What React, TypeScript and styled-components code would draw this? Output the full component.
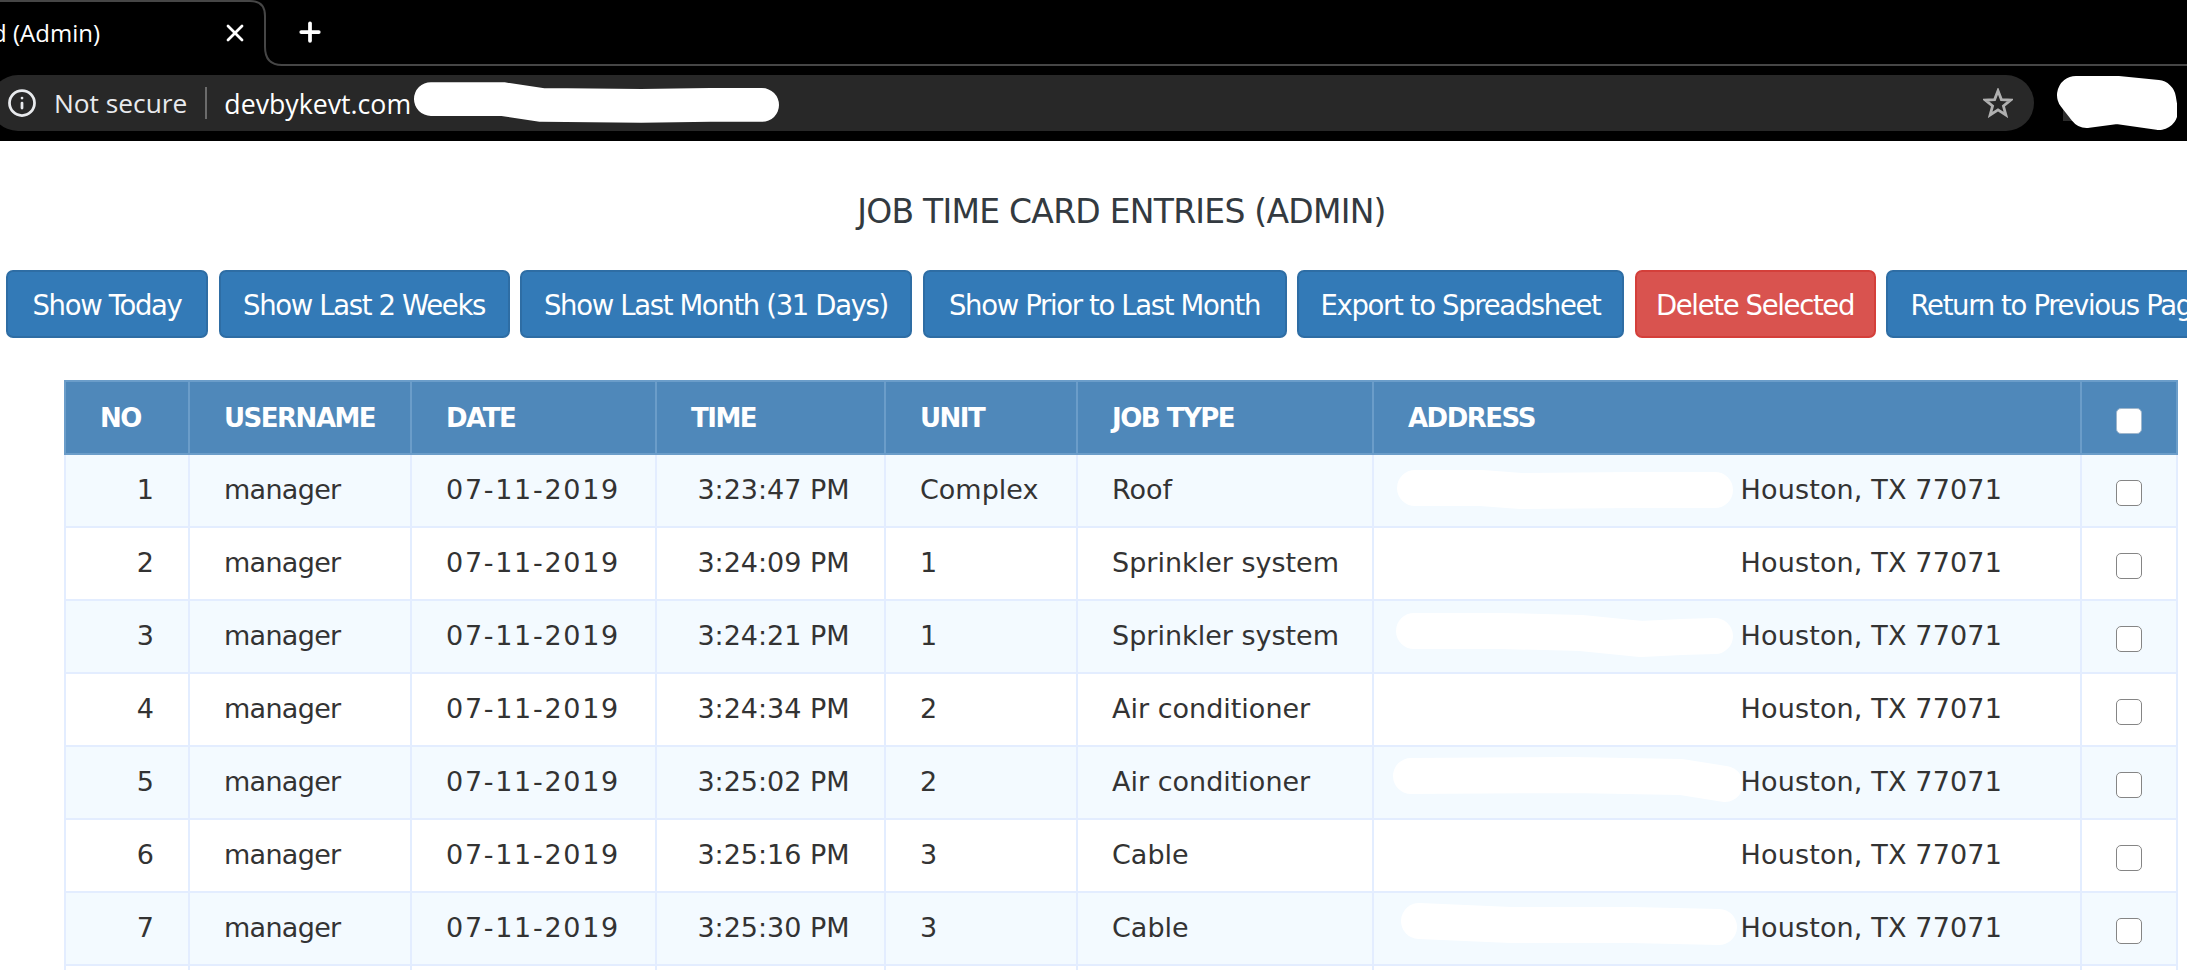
import React from 'react';
import styled, { createGlobalStyle } from 'styled-components';
import { Info, Plus, X } from 'lucide-react';

const GlobalStyle = createGlobalStyle`
  html, body {
    margin: 0;
    padding: 0;
    background: #ffffff;
    overflow: hidden;
  }
`;

const Page = styled.div`
  width: 2187px;
  height: 970px;
  overflow: hidden;
  background: #ffffff;
  color: #333333;
  font-family: 'DejaVu Sans', 'Liberation Sans', sans-serif;
`;

const TabStrip = styled.div`
  display: flex;
  height: 66px;
  background: #000000;
`;

const Tab = styled.div`
  width: 250px;
  height: 66px;
  box-sizing: border-box;
  padding-bottom: 3px;
  border-top: 2px solid #464646;
  display: flex;
  align-items: center;
  justify-content: flex-end;
  color: #ffffff;
  overflow: hidden;
  flex-shrink: 0;
`;

const TabTitle = styled.span`
  font-family: 'Open Sans', sans-serif;
  font-size: 24px;
  white-space: nowrap;
  margin-right: 121px;
`;

const TabClose = styled(X)`
  flex-shrink: 0;
  margin-right: 1px;
`;

const TabCurve = styled.svg`
  flex-shrink: 0;
  display: block;
`;

const TabRest = styled.div`
  flex: 1;
  box-sizing: border-box;
  border-bottom: 2px solid #464646;
  display: flex;
  align-items: center;
  padding-left: 13px;
  color: #ffffff;
`;

const NavRow = styled.div`
  height: 75px;
  box-sizing: border-box;
  padding-top: 9px;
  background: #000000;
  display: flex;
  overflow: hidden;
`;

const AddressBar = styled.div`
  width: 2044px;
  height: 56px;
  margin-left: -10px;
  box-sizing: border-box;
  padding: 0 21px 0 17px;
  background: #282828;
  border-radius: 28px;
  display: flex;
  align-items: center;
  flex-shrink: 0;
  color: #ffffff;
  font-family: 'Open Sans', sans-serif;
  font-size: 26.7px;
`;

const NotSecure = styled.span`
  margin-left: 17px;
  font-size: 26.3px;
  color: #e8eaed;
`;

const Divider = styled.span`
  width: 2px;
  height: 32px;
  margin: 0 17px 0 18px;
  background: #6b6b6b;
`;

const UrlHost = styled.span``;

const UrlMask = styled.svg`
  display: block;
  margin-left: 2px;
`;

const Spacer = styled.div`
  flex: 1;
`;

const AvatarMask = styled.svg`
  display: block;
  margin-left: 23px;
  flex-shrink: 0;
`;

const Title = styled.h1`
  margin: 0;
  padding: 49px 0 0 56px;
  font-size: 33px;
  line-height: 44px;
  font-weight: 400;
  text-align: center;
  color: #333a40;
  letter-spacing: -0.75px;
`;

const Toolbar = styled.div`
  display: flex;
  gap: 10.5px;
  margin: 36px 0 42px 6px;
  white-space: nowrap;
`;

const Button = styled.button<{ $danger?: boolean; $width: number }>`
  flex-shrink: 0;
  width: ${props => props.$width}px;
  height: 68px;
  box-sizing: border-box;
  padding: 2px 0 0;
  border: 2px solid ${props => (props.$danger ? '#d43f3a' : '#2e6da4')};
  border-radius: 7px;
  background: ${props => (props.$danger ? '#d9534f' : '#337ab7')};
  color: #ffffff;
  font-family: inherit;
  font-size: 27.5px;
  letter-spacing: -1.35px;
  white-space: nowrap;
`;

const JobTable = styled.table`
  width: 2112px;
  margin-left: 64px;
  table-layout: fixed;
  border-collapse: collapse;
`;

const HeadCell = styled.th`
  height: 71px;
  padding: 0 0 0 34px;
  background: #4f88ba;
  border: 2px solid #6b9dc9;
  color: #ffffff;
  font-size: 26px;
  font-weight: 700;
  text-align: left;
  letter-spacing: -1.5px;
`;

const CheckHeadCell = styled(HeadCell)`
  padding: 0;
  text-align: center;
`;

const Row = styled.tr<{ $shaded: boolean }>`
  background: ${props => (props.$shaded ? '#f3faff' : '#ffffff')};
`;

const Cell = styled.td<{ $align?: string; $spacing?: number }>`
  height: 69px;
  padding: 0 34px 2px;
  border: 2px solid #e3edff;
  font-size: 27px;
  white-space: nowrap;
  text-align: ${props => props.$align || 'left'};
  letter-spacing: ${props => props.$spacing || 0}px;
  color: #333333;
`;

const TimeCell = styled(Cell)`
  padding: 0 34px 2px 40px;
`;

const AddressCell = styled(Cell)`
  padding: 0 78px 2px 0;
`;

const AddressInner = styled.div`
  display: flex;
  align-items: center;
  justify-content: flex-end;
`;

const Mask = styled.svg`
  display: block;
  flex-shrink: 0;
  overflow: visible;
`;

const CheckCell = styled(Cell)`
  padding: 0 0 2px;
  text-align: center;
`;

const Check = styled.input<{ $head?: boolean }>`
  appearance: none;
  display: inline-block;
  width: 26px;
  height: 26px;
  margin: 6px 0 0;
  box-sizing: border-box;
  vertical-align: middle;
  border: 1.5px solid ${props => (props.$head ? '#9fb6cc' : '#858585')};
  border-radius: 5px;
  background: #ffffff;
`;

const buttons = [
  { label: 'Show Today', width: 202 },
  { label: 'Show Last 2 Weeks', width: 291 },
  { label: 'Show Last Month (31 Days)', width: 392 },
  { label: 'Show Prior to Last Month', width: 364 },
  { label: 'Export to Spreadsheet', width: 327 },
  { label: 'Delete Selected', width: 241, danger: true },
  { label: 'Return to Previous Page', width: 346 },
];

const columns = [
  { name: 'NO', width: 124 },
  { name: 'USERNAME', width: 222 },
  { name: 'DATE', width: 245 },
  { name: 'TIME', width: 229 },
  { name: 'UNIT', width: 192 },
  { name: 'JOB TYPE', width: 296 },
  { name: 'ADDRESS', width: 708 },
];

// the scribbled out street numbers, one stroke per shaded row
const masks: Record<number, string> = {
  1: 'M24 23 L90 23 L130 26 L240 25 L324 25',
  3: 'M23 20 H110 L190 22 L250 28 L290 26 L324 25',
  5: 'M20 19 L180 18 L290 20 L334 27',
  7: 'M28 18 L120 22 L240 22 L328 24',
};

const rows = [
  { no: 1, time: '3:23:47 PM', unit: 'Complex', job: 'Roof' },
  { no: 2, time: '3:24:09 PM', unit: '1', job: 'Sprinkler system' },
  { no: 3, time: '3:24:21 PM', unit: '1', job: 'Sprinkler system' },
  { no: 4, time: '3:24:34 PM', unit: '2', job: 'Air conditioner' },
  { no: 5, time: '3:25:02 PM', unit: '2', job: 'Air conditioner' },
  { no: 6, time: '3:25:16 PM', unit: '3', job: 'Cable' },
  { no: 7, time: '3:25:30 PM', unit: '3', job: 'Cable' },
];

const App: React.FC = () => {
  return (
    <Page>
      <GlobalStyle />
      <TabStrip>
        <Tab>
          <TabTitle>Job Time Card (Admin)</TabTitle>
          <TabClose size={28} strokeWidth={2.4} />
        </Tab>
        <TabCurve width="32" height="66" viewBox="0 0 32 66">
          <path d="M0 1 Q15 1 15 16 V47 Q15 65 32 65" fill="none" stroke="#464646" strokeWidth="2" />
        </TabCurve>
        <TabRest>
          <Plus size={30} strokeWidth={3} />
        </TabRest>
      </TabStrip>

      <NavRow>
        <AddressBar>
          <Info size={30} strokeWidth={2.2} color="#e8eaed" />
          <NotSecure>Not secure</NotSecure>
          <Divider />
          <UrlHost>devbykevt.com</UrlHost>
          <UrlMask width="366" height="44" viewBox="0 0 369 44">
            <path d="M18 18 L90 18 L130 24 L230 25 L300 24 L352 24" fill="none" stroke="#ffffff" strokeWidth="34" strokeLinecap="round" strokeLinejoin="round" />
          </UrlMask>
          <Spacer />
          <svg width="30" height="30" viewBox="0 0 32 32">
            <polygon points="16,3 19.6,12.4 29.5,12.9 21.8,19.2 24.4,28.8 16,23.4 7.6,28.8 10.2,19.2 2.5,12.9 12.4,12.4" fill="none" stroke="#b0b0b0" strokeWidth="3" />
          </svg>
        </AddressBar>
        <AvatarMask width="120" height="56" viewBox="0 0 120 56">
          <rect x="6" y="20" width="40" height="26" fill="#2c2c2c" />
          <rect x="68" y="38" width="18" height="10" fill="#e01b1b" />
          <path d="M19 20 L60 20 L100 24 L102 36 L60 30 L30 34 Z" fill="#ffffff" stroke="#ffffff" strokeWidth="38" strokeLinejoin="round" />
        </AvatarMask>
      </NavRow>

      <Title>JOB TIME CARD ENTRIES (ADMIN)</Title>

      <Toolbar>
        {buttons.map(button => (
          <Button key={button.label} $danger={button.danger} $width={button.width}>
            {button.label}
          </Button>
        ))}
      </Toolbar>

      <JobTable>
        <colgroup>
          {columns.map(column => (
            <col key={column.name} width={column.width} />
          ))}
          <col width={96} />
        </colgroup>
        <thead>
          <tr>
            {columns.map(column => (
              <HeadCell key={column.name}>{column.name}</HeadCell>
            ))}
            <CheckHeadCell>
              <Check type="checkbox" $head />
            </CheckHeadCell>
          </tr>
        </thead>
        <tbody>
          {rows.map(row => (
            <Row key={row.no} $shaded={row.no % 2 === 1}>
              <Cell $align="right">{row.no}</Cell>
              <Cell $spacing={-0.7}>manager</Cell>
              <Cell $spacing={1.7}>07-11-2019</Cell>
              <TimeCell $align="center">{row.time}</TimeCell>
              <Cell>{row.unit}</Cell>
              <Cell>{row.job}</Cell>
              <AddressCell $spacing={0.15}>
                <AddressInner>
                  {masks[row.no] && (
                    <Mask width="350" height="50" viewBox="0 0 350 50">
                      <path d={masks[row.no]} fill="none" stroke="#ffffff" strokeWidth="36" strokeLinecap="round" strokeLinejoin="round" />
                    </Mask>
                  )}
                  Houston, TX 77071
                </AddressInner>
              </AddressCell>
              <CheckCell>
                <Check type="checkbox" />
              </CheckCell>
            </Row>
          ))}
          {/* next row is only just in view at the bottom, its text is below the fold */}
          <Row $shaded={false}>
            {columns.map(column => (
              <Cell key={column.name} />
            ))}
            <Cell />
          </Row>
        </tbody>
      </JobTable>
    </Page>
  );
};

export default App;
